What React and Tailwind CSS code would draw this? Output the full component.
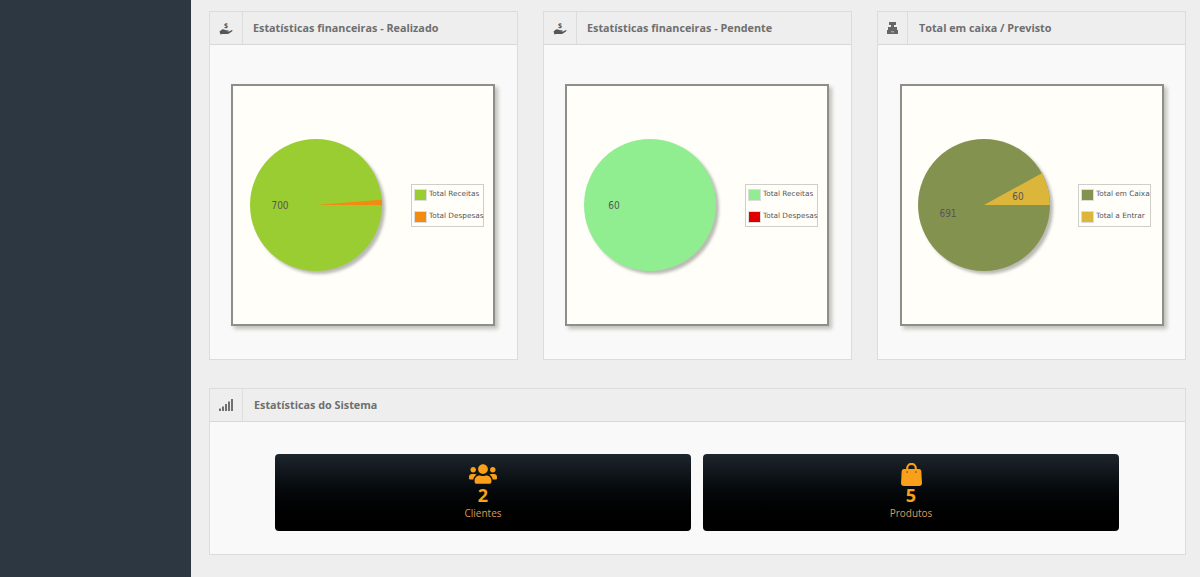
import React from "react";
import { FaUsers } from "react-icons/fa";

function polar(cx, cy, r, deg) {
  const a = (deg * Math.PI) / 180;
  return [cx + r * Math.cos(a), cy - r * Math.sin(a)];
}

function HandIcon() {
  return (
    <svg width="14" height="18" viewBox="0 0 14 18" fill="#555">
      <text x="7" y="9" textAnchor="middle" fontSize="7" fontWeight="700" fontFamily="'Open Sans', sans-serif">$</text>
      <path d="M0.5 12.5 L3 10.5 Q4 10 5 10.5 L7 11.3 H9 Q10 11.5 9.5 12.5 H6.5 L9.5 12.8 L13 11 Q14 11.3 13.2 12.2 L10 14.6 Q9.4 15 8.5 15 H3 L1.5 15.6 Z" />
    </svg>
  );
}

function RegisterIcon() {
  return (
    <svg width="11" height="12" viewBox="0 0 11 12" fill="#666">
      <rect x="2" y="0" width="7" height="3" />
      <rect x="4" y="3" width="3" height="2" />
      <rect x="1" y="5" width="9" height="3" />
      <rect x="0" y="8" width="11" height="4" />
      <rect x="4" y="9.3" width="3" height="1" fill="#bbb" />
    </svg>
  );
}

function SignalIcon() {
  return (
    <svg width="14" height="12" viewBox="0 0 14 12" fill="#707070">
      <rect x="0" y="9.5" width="2" height="2.5" />
      <rect x="3" y="7.5" width="2" height="4.5" />
      <rect x="6" y="5" width="2" height="7" />
      <rect x="9" y="2.5" width="2" height="9.5" />
      <rect x="12" y="0" width="2" height="12" />
    </svg>
  );
}

function BagIcon() {
  return (
    <svg width="21" height="23" viewBox="0 0 21 23" fill="#f9a01b">
      <path d="M3 6 H18 Q20 6 20.3 8 L21 20 Q21 23 18 23 H3 Q0 23 0 20 L0.7 8 Q1 6 3 6 Z" />
      <path d="M6.2 8 V5.2 a4.3 4.3 0 0 1 8.6 0 V8" fill="none" stroke="#f9a01b" strokeWidth="2.2" />
      <circle cx="6.2" cy="9" r="0.9" fill="#9a6414" />
      <circle cx="14.8" cy="9" r="0.9" fill="#9a6414" />
    </svg>
  );
}

function Card({ icon, title, className, cellClass, titleClass, children }) {
  return (
    <section className={`border border-[#dcdcdc] bg-[#f9f9f9] ${className || ""}`}>
      <header className="flex h-[33px] items-center border-b border-[#d8d8d8] bg-[#eeeeee]">
        <div className={`flex h-full shrink-0 items-center justify-center border-r border-[#dddddd] ${cellClass || "w-[33px]"}`}>{icon}</div>
        <h3 className={`whitespace-nowrap text-[10.8px] font-bold text-[#6f6f6f] ${titleClass || "ml-[10px]"}`}>{title}</h3>
      </header>
      {children}
    </section>
  );
}

function Pie({ color, slice, sliceColor, sliceDeg, labels, legend, boxClass, legendClass }) {
  const cx = 68, cy = 68, r = 66;
  const [x2, y2] = polar(cx, cy, r, sliceDeg || 0);
  return (
    <div className={`mt-[39px] flex h-[242px] w-[264px] items-start border-2 border-[#8e8e8a] bg-[#fffef8] pt-[51px] shadow-[3px_3px_4px_#c0c0bb] ${boxClass || "ml-[21px] pl-[15px]"}`}>
      <svg width="146" height="146" viewBox="0 0 146 146" className="shrink-0">
        <defs>
          <filter id="pieblur" x="-10%" y="-10%" width="125%" height="125%">
            <feGaussianBlur stdDeviation="1.8" />
          </filter>
        </defs>
        <circle cx={cx + 3} cy={cy + 3} r={r} fill="#8d8d88" opacity="0.6" filter="url(#pieblur)" />
        <circle cx={cx} cy={cy} r={r} fill={color} />
        {slice && <path d={`M${cx} ${cy} L${cx + r} ${cy} A${r} ${r} 0 0 0 ${x2} ${y2} Z`} fill={sliceColor} />}
        {labels.map((l) => (
          <text key={l.t} x={l.x} y={l.y} textAnchor="middle" fontSize="10" fill="#555" fontFamily="'DejaVu Sans Condensed', 'DejaVu Sans', sans-serif">{l.t}</text>
        ))}
      </svg>
      <div className={`mt-[47px] flex h-[43px] w-[73px] shrink-0 flex-col justify-center gap-[10px] border border-[#cfcfca] pl-[2px] font-['DejaVu_Sans',sans-serif] text-[7.3px] text-[#555] ${legendClass || "ml-[17px]"}`}>
        {legend.map((l) => (
          <div key={l.t} className="flex items-center gap-[2px] whitespace-nowrap">
            <span className="box-content h-[10px] w-[11px] shrink-0 border border-[#ddd]" style={{ background: l.c }} />
            {l.t}
          </div>
        ))}
      </div>
    </div>
  );
}

function Stat({ icon, value, label }) {
  return (
    <div className="flex h-[77px] flex-col items-center rounded-[4px] bg-gradient-to-b from-[#1d252c] to-[#000000] pt-[9px] text-[#f9a01b]">
      <div className="flex h-[22px] items-center">{icon}</div>
      <div className="text-[18px] font-bold leading-[20px]">{value}</div>
      <div className="mt-[1px] text-[10px] leading-[14px] text-[#dc9a55]">{label}</div>
    </div>
  );
}

export default function App() {
  return (
    <div className="flex h-[577px] overflow-hidden bg-[#eeeeee] font-['Open_Sans',sans-serif]">
      <aside className="w-[191px] shrink-0 bg-[#2c3741]" />
      <main className="flex-1 pl-[18px] pr-[14px] pt-[11px]">
        <div className="grid grid-cols-[309px_309px_309px] gap-x-[25px]">
          <Card className="h-[349px]" icon={<HandIcon />} title="Estatísticas financeiras - Realizado">
            <Pie color="#9acd32" slice sliceColor="#f58a10" sliceDeg={4.5}
              labels={[{ t: "700", x: 32, y: 72 }]}
              legend={[{ t: "Total Receitas", c: "#9acd32" }, { t: "Total Despesas", c: "#f58a10" }]} />
          </Card>
          <Card className="h-[349px]" icon={<HandIcon />} title="Estatísticas financeiras - Pendente">
            <Pie color="#90ee90"
              labels={[{ t: "60", x: 32, y: 72 }]}
              legend={[{ t: "Total Receitas", c: "#90ee90" }, { t: "Total Despesas", c: "#e00000" }]} />
          </Card>
          <Card className="h-[349px]" cellClass="w-[30px]" titleClass="ml-[11px]" icon={<RegisterIcon />} title="Total em caixa / Previsto">
            <Pie color="#84924f" slice sliceColor="#dcb63b" sliceDeg={28.8}
              boxClass="ml-[22px] pl-[14px]" legendClass="ml-[16px]"
              labels={[{ t: "691", x: 32, y: 80 }, { t: "60", x: 102, y: 63 }]}
              legend={[{ t: "Total em Caixa", c: "#84924f" }, { t: "Total a Entrar", c: "#dcb63b" }]} />
          </Card>
        </div>
        <Card className="mt-[28px] h-[167px]" titleClass="ml-[11px]" icon={<SignalIcon />} title="Estatísticas do Sistema">
          <div className="grid grid-cols-2 gap-x-[12px] pl-[65px] pr-[66px] pt-[32px]">
            <Stat icon={<FaUsers size={28} />} value="2" label="Clientes" />
            <Stat icon={<BagIcon />} value="5" label="Produtos" />
          </div>
        </Card>
      </main>
    </div>
  );
}
